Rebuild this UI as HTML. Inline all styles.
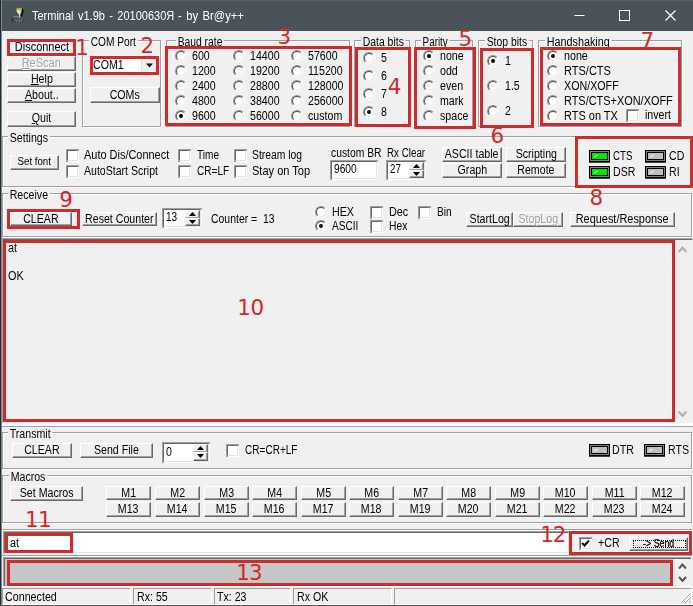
<!DOCTYPE html>
<html><head><meta charset="utf-8"><title>Terminal</title>
<style>
html,body{margin:0;padding:0}
body{width:693px;height:606px;background:#f0f0f0;position:relative;overflow:hidden;font-family:"Liberation Sans", sans-serif;font-size:11px;color:#000}
body>div,body>span,body>svg{position:absolute;box-sizing:content-box}
.t{white-space:pre;display:block;transform-origin:0 50%}
.bt{display:inline-block;transform:scaleX(.88);transform-origin:50% 50%}
.z{z-index:5}
.gl{background:#f0f0f0;padding:0 2px}
.btn{box-sizing:border-box!important;background:#f0f0f0;border-top:1px solid #fff;border-left:1px solid #fff;border-right:1px solid #696969;border-bottom:1px solid #696969;box-shadow:inset -1px -1px 0 #a0a0a0;text-align:center;white-space:nowrap;overflow:hidden;display:flex;justify-content:center}
.sp{display:flex;align-items:center;justify-content:center}
.grp{box-sizing:border-box!important;border:1px solid #a0a0a0;box-shadow:1px 1px 0 #fff, inset 1px 1px 0 #fff}
.rad{width:12px;height:12px;border-radius:50%;box-sizing:border-box!important;border:1px solid;border-color:#909090 #fff #fff #909090;transform:rotate(0deg)}
.rad:before{content:"";position:absolute;left:0;top:0;width:8px;height:8px;border-radius:50%;background:#fff;border:1px solid;border-color:#505050 #e3e3e3 #e3e3e3 #505050}
.rad i{position:absolute;left:3px;top:3px;width:4px;height:4px;background:#000;border-radius:50%}
.chk{width:9px;height:9px;background:#fff;border:1px solid;border-color:#696969 #e3e3e3 #e3e3e3 #696969;outline:0;box-shadow:-1px -1px 0 #a0a0a0, 1px 1px 0 #fff, 1px -1px 0 #a0a0a0, -1px 1px 0 #a0a0a0;margin:1px}
.led{width:21px;height:12px;box-sizing:border-box!important;border:1px solid #000;background:#000;box-shadow:inset 0 0 0 1px #808080, 0 1px 0 #404040}
.led b{position:absolute;left:2px;top:2px;right:2px;bottom:2px}
.edit{background:#fff;border:1px solid;border-color:#696969 #e3e3e3 #e3e3e3 #696969;box-shadow:-1px -1px 0 #a0a0a0, 1px 1px 0 #fff, 1px -1px 0 #a0a0a0, -1px 1px 0 #a0a0a0;margin:1px}
.sb{border:1px solid;border-color:#a0a0a0 #fff #fff #a0a0a0}
</style></head><body>
<div style="left:0px;top:0px;width:693px;height:31px;background:#4b535a"></div>
<div style="left:0px;top:0px;width:693px;height:1px;background:#5b6267"></div>
<div style="left:0px;top:0px;width:1px;height:606px;background:#1e2d36"></div>
<div style="left:1px;top:0px;width:1px;height:606px;background:#7b8a90"></div>
<svg style="left:6px;top:4px" width="24" height="24" viewBox="6 4 24 24">
<rect x="16.6" y="7.9" width="5.2" height="2.3" fill="#cfca08"/>
<rect x="17.2" y="7.6" width="4" height="0.7" fill="#4a5a7a"/>
<path d="M16.2 10.2 L21.5 10.2 L20.3 14.2 L18.3 14.2 Z" fill="#dcdcdc"/>
<path d="M17 10.8 L19 10.8 L18.6 12 L17.4 12Z" fill="#fff"/>
<path d="M22.2 9 Q23.2 10 22.6 12.5 L21.6 16.5" fill="none" stroke="#050505" stroke-width="1.4"/>
<path d="M19.4 14 L19.6 17.6" fill="none" stroke="#c8c8c8" stroke-width="1.1"/>
<path d="M12.2 17.6 L14.5 16.6 L19 16.8" fill="none" stroke="#8a8a8a" stroke-width="1"/>
<path d="M12.3 17 L12.5 22.4 M11.2 19.6 L13.6 19.6" fill="none" stroke="#2a2a2a" stroke-width="1"/>
<path d="M14.5 19.3 L22.5 19.3 L23.6 22.3 L15 22.3 Z" fill="#3a3a3a"/>
<path d="M15.2 20 h1.2 M17.2 20 h1.2 M19.2 20 h1.2 M21 20 h1 M16 21.3 h1.2 M18.4 21.3 h1.4 M20.6 21.3 h1.4" stroke="#b0b0b0" stroke-width="0.8"/>
</svg>
<span class="t" style="left:31.5px;top:7.5px;height:16px;line-height:16px;font-size:12px;color:#fff;transform:scaleX(0.916);word-spacing:1.5px">Terminal v1.9b - 20100630Я</span>
<span class="t" style="left:177.7px;top:7.5px;height:16px;line-height:16px;font-size:12px;color:#fff;transform:scaleX(0.933);word-spacing:1.5px">- by Br@y++</span>
<svg style="left:560px;top:0" width="133" height="31" viewBox="0 0 133 31"><path d="M14.5 15.5 h10" stroke="#fff" stroke-width="1"/><rect x="59.5" y="10.5" width="10" height="10" fill="none" stroke="#fff" stroke-width="1"/><path d="M105.5 10.5 l10 10 M115.5 10.5 l-10 10" stroke="#fff" stroke-width="1.2"/></svg>
<div class="btn" style="left:7px;top:40px;width:69px;height:15px;line-height:12.5px;font-size:12.5px;color:#000;"><span class="bt" style="transform:scaleX(0.875)">Disconnect</span></div>
<div class="btn" style="left:7px;top:56px;width:69px;height:15px;line-height:12.5px;font-size:12.5px;color:#a0a0a0;text-shadow:1px 1px 0 #fff;"><span class="bt" style="transform:scaleX(0.88)"><u>R</u>eScan</span></div>
<div class="btn" style="left:7px;top:72px;width:69px;height:15px;line-height:12.5px;font-size:12.5px;color:#000;"><span class="bt" style="transform:scaleX(0.85)"><u>H</u>elp</span></div>
<div class="btn" style="left:7px;top:88px;width:69px;height:15px;line-height:12.5px;font-size:12.5px;color:#000;"><span class="bt" style="transform:scaleX(0.85)"><u>A</u>bout..</span></div>
<div class="btn" style="left:7px;top:111px;width:69px;height:16px;line-height:12px;font-size:12.5px;color:#000;"><span class="bt" style="transform:scaleX(0.85)"><u>Q</u>uit</span></div>
<div class="z" style="left:7px;top:39px;width:63px;height:11px;border:3px solid #d02a2a"></div>
<span class="t z" style="left:75.3px;top:37.0px;font-size:21.4px;line-height:21.4px;height:21.4px;letter-spacing:0px;color:#d02828;font-family:'DejaVu Sans','Liberation Sans',sans-serif;">1</span>
<div class="grp" style="left:82px;top:40px;width:79px;height:87px"></div>
<span class="t gl" style="left:89.2px;top:34.6px;height:14px;line-height:14px;font-size:12.5px;transform:scaleX(0.814)">COM Port</span>
<div class="edit" style="left:91px;top:57px;width:63px;height:13px;"></div>
<span class="t" style="left:93.2px;top:57.8px;height:14px;line-height:14px;font-size:12.5px;color:#000;transform:scaleX(0.85);">COM1</span>
<svg style="left:141px;top:59px" width="15" height="13" viewBox="0 0 15 13"><rect width="15" height="13" fill="#f0f0f0"/><rect width="1" height="13" fill="#e0e0e0"/><path d="M5 4.5 h7 l-3.5 4z" fill="#000"/></svg>
<div class="z" style="left:90px;top:56px;width:63px;height:13px;border:3px solid #d02a2a"></div>
<span class="t z" style="left:140.4px;top:34.8px;font-size:21.4px;line-height:21.4px;height:21.4px;letter-spacing:0px;color:#d02828;font-family:'DejaVu Sans','Liberation Sans',sans-serif;">2</span>
<div class="btn" style="left:90px;top:87px;width:70px;height:16px;line-height:14px;font-size:12.5px;color:#000;"><span class="bt" style="transform:scaleX(0.85)">COMs</span></div>
<div class="grp" style="left:166px;top:40px;width:184px;height:87px"></div>
<span class="t gl" style="left:175.70000000000002px;top:34.6px;height:14px;line-height:14px;font-size:12.5px;transform:scaleX(0.825)">Baud rate</span>
<div class="rad" style="left:175px;top:50px"></div>
<span class="t" style="left:192px;top:49.0px;height:14px;line-height:14px;font-size:12.5px;color:#000;transform:scaleX(0.85);">600</span>
<div class="rad" style="left:175px;top:64.5px"></div>
<span class="t" style="left:192px;top:63.5px;height:14px;line-height:14px;font-size:12.5px;color:#000;transform:scaleX(0.85);">1200</span>
<div class="rad" style="left:175px;top:79.5px"></div>
<span class="t" style="left:192px;top:78.5px;height:14px;line-height:14px;font-size:12.5px;color:#000;transform:scaleX(0.85);">2400</span>
<div class="rad" style="left:175px;top:94.5px"></div>
<span class="t" style="left:192px;top:93.5px;height:14px;line-height:14px;font-size:12.5px;color:#000;transform:scaleX(0.85);">4800</span>
<div class="rad" style="left:175px;top:109.5px"><i></i></div>
<span class="t" style="left:192px;top:108.5px;height:14px;line-height:14px;font-size:12.5px;color:#000;transform:scaleX(0.85);">9600</span>
<div class="rad" style="left:232.5px;top:50px"></div>
<span class="t" style="left:250px;top:49.0px;height:14px;line-height:14px;font-size:12.5px;color:#000;transform:scaleX(0.85);">14400</span>
<div class="rad" style="left:232.5px;top:64.5px"></div>
<span class="t" style="left:250px;top:63.5px;height:14px;line-height:14px;font-size:12.5px;color:#000;transform:scaleX(0.85);">19200</span>
<div class="rad" style="left:232.5px;top:79.5px"></div>
<span class="t" style="left:250px;top:78.5px;height:14px;line-height:14px;font-size:12.5px;color:#000;transform:scaleX(0.85);">28800</span>
<div class="rad" style="left:232.5px;top:94.5px"></div>
<span class="t" style="left:250px;top:93.5px;height:14px;line-height:14px;font-size:12.5px;color:#000;transform:scaleX(0.85);">38400</span>
<div class="rad" style="left:232.5px;top:109.5px"></div>
<span class="t" style="left:250px;top:108.5px;height:14px;line-height:14px;font-size:12.5px;color:#000;transform:scaleX(0.85);">56000</span>
<div class="rad" style="left:290.8px;top:50px"></div>
<span class="t" style="left:308px;top:49.0px;height:14px;line-height:14px;font-size:12.5px;color:#000;transform:scaleX(0.85);">57600</span>
<div class="rad" style="left:290.8px;top:64.5px"></div>
<span class="t" style="left:308px;top:63.5px;height:14px;line-height:14px;font-size:12.5px;color:#000;transform:scaleX(0.85);">115200</span>
<div class="rad" style="left:290.8px;top:79.5px"></div>
<span class="t" style="left:308px;top:78.5px;height:14px;line-height:14px;font-size:12.5px;color:#000;transform:scaleX(0.85);">128000</span>
<div class="rad" style="left:290.8px;top:94.5px"></div>
<span class="t" style="left:308px;top:93.5px;height:14px;line-height:14px;font-size:12.5px;color:#000;transform:scaleX(0.85);">256000</span>
<div class="rad" style="left:290.8px;top:109.5px"></div>
<span class="t" style="left:308px;top:108.5px;height:14px;line-height:14px;font-size:12.5px;color:#000;transform:scaleX(0.85);">custom</span>
<div class="z" style="left:165px;top:46px;width:180.5px;height:73.5px;border:3px solid #d02a2a"></div>
<span class="t z" style="left:277.5px;top:26.0px;font-size:21.4px;line-height:21.4px;height:21.4px;letter-spacing:0px;color:#d02828;font-family:'DejaVu Sans','Liberation Sans',sans-serif;">3</span>
<div class="grp" style="left:354px;top:40px;width:56px;height:87px"></div>
<span class="t gl" style="left:360.7px;top:34.6px;height:14px;line-height:14px;font-size:12.5px;transform:scaleX(0.835)">Data bits</span>
<div class="rad" style="left:362.5px;top:51.7px"></div>
<span class="t" style="left:381px;top:50.7px;height:14px;line-height:14px;font-size:12.5px;color:#000;transform:scaleX(0.85);">5</span>
<div class="rad" style="left:362.5px;top:70.2px"></div>
<span class="t" style="left:381px;top:69.2px;height:14px;line-height:14px;font-size:12.5px;color:#000;transform:scaleX(0.85);">6</span>
<div class="rad" style="left:362.5px;top:88.3px"></div>
<span class="t" style="left:381px;top:87.3px;height:14px;line-height:14px;font-size:12.5px;color:#000;transform:scaleX(0.85);">7</span>
<div class="rad" style="left:362.5px;top:106px"><i></i></div>
<span class="t" style="left:381px;top:105.0px;height:14px;line-height:14px;font-size:12.5px;color:#000;transform:scaleX(0.85);">8</span>
<div class="z" style="left:355px;top:47px;width:50px;height:74px;border:3px solid #d02a2a"></div>
<span class="t z" style="left:387.8px;top:76.0px;font-size:21.4px;line-height:21.4px;height:21.4px;letter-spacing:0px;color:#d02828;font-family:'DejaVu Sans','Liberation Sans',sans-serif;">4</span>
<div class="grp" style="left:415px;top:40px;width:58px;height:87px"></div>
<span class="t gl" style="left:421.09999999999997px;top:34.6px;height:14px;line-height:14px;font-size:12.5px;transform:scaleX(0.789)">Parity</span>
<div class="rad" style="left:422.5px;top:50px"><i></i></div>
<span class="t" style="left:439.9px;top:49.0px;height:14px;line-height:14px;font-size:12.5px;color:#000;transform:scaleX(0.85);">none</span>
<div class="rad" style="left:422.5px;top:65px"></div>
<span class="t" style="left:439.9px;top:64.0px;height:14px;line-height:14px;font-size:12.5px;color:#000;transform:scaleX(0.85);">odd</span>
<div class="rad" style="left:422.5px;top:80.2px"></div>
<span class="t" style="left:439.9px;top:79.2px;height:14px;line-height:14px;font-size:12.5px;color:#000;transform:scaleX(0.85);">even</span>
<div class="rad" style="left:422.5px;top:95.2px"></div>
<span class="t" style="left:439.9px;top:94.2px;height:14px;line-height:14px;font-size:12.5px;color:#000;transform:scaleX(0.85);">mark</span>
<div class="rad" style="left:422.5px;top:110px"></div>
<span class="t" style="left:439.9px;top:109.0px;height:14px;line-height:14px;font-size:12.5px;color:#000;transform:scaleX(0.85);">space</span>
<div class="z" style="left:414px;top:47px;width:55.5px;height:75.5px;border:3px solid #d02a2a"></div>
<span class="t z" style="left:458.5px;top:28.3px;font-size:21.4px;line-height:21.4px;height:21.4px;letter-spacing:0px;color:#d02828;font-family:'DejaVu Sans','Liberation Sans',sans-serif;">5</span>
<div class="grp" style="left:478px;top:40px;width:55px;height:87px"></div>
<span class="t gl" style="left:484.9px;top:34.6px;height:14px;line-height:14px;font-size:12.5px;transform:scaleX(0.831)">Stop bits</span>
<div class="rad" style="left:486.5px;top:54.6px"><i></i></div>
<span class="t" style="left:504.5px;top:53.6px;height:14px;line-height:14px;font-size:12.5px;color:#000;transform:scaleX(0.85);">1</span>
<div class="rad" style="left:486.5px;top:79.7px"></div>
<span class="t" style="left:504.5px;top:78.7px;height:14px;line-height:14px;font-size:12.5px;color:#000;transform:scaleX(0.85);">1.5</span>
<div class="rad" style="left:486.5px;top:104.8px"></div>
<span class="t" style="left:504.5px;top:103.8px;height:14px;line-height:14px;font-size:12.5px;color:#000;transform:scaleX(0.85);">2</span>
<div class="z" style="left:480px;top:48px;width:47.5px;height:74px;border:3px solid #d02a2a"></div>
<span class="t z" style="left:490.5px;top:125.0px;font-size:21.4px;line-height:21.4px;height:21.4px;letter-spacing:0px;color:#d02828;font-family:'DejaVu Sans','Liberation Sans',sans-serif;">6</span>
<div class="grp" style="left:538px;top:40px;width:144px;height:87px"></div>
<span class="t gl" style="left:544.9px;top:34.6px;height:14px;line-height:14px;font-size:12.5px;transform:scaleX(0.863)">Handshaking</span>
<div class="rad" style="left:546.5px;top:50px"><i></i></div>
<span class="t" style="left:563.8px;top:49.0px;height:14px;line-height:14px;font-size:12.5px;color:#000;transform:scaleX(0.856);">none</span>
<div class="rad" style="left:546.5px;top:64.5px"></div>
<span class="t" style="left:563.8px;top:63.5px;height:14px;line-height:14px;font-size:12.5px;color:#000;transform:scaleX(0.881);">RTS/CTS</span>
<div class="rad" style="left:546.5px;top:79.5px"></div>
<span class="t" style="left:563.8px;top:78.5px;height:14px;line-height:14px;font-size:12.5px;color:#000;transform:scaleX(0.856);">XON/XOFF</span>
<div class="rad" style="left:546.5px;top:94.7px"></div>
<span class="t" style="left:563.8px;top:93.7px;height:14px;line-height:14px;font-size:12.5px;color:#000;transform:scaleX(0.874);">RTS/CTS+XON/XOFF</span>
<div class="rad" style="left:546.5px;top:109.7px"></div>
<span class="t" style="left:563.8px;top:108.7px;height:14px;line-height:14px;font-size:12.5px;color:#000;transform:scaleX(0.878);">RTS on TX</span>
<div class="chk" style="left:626px;top:109px"></div>
<span class="t" style="left:644.6px;top:108.0px;height:14px;line-height:14px;font-size:12.5px;color:#000;transform:scaleX(0.847);">invert</span>
<div class="z" style="left:540px;top:47px;width:135px;height:73px;border:3px solid #d02a2a"></div>
<span class="t z" style="left:640.5px;top:30.0px;font-size:21.4px;line-height:21.4px;height:21.4px;letter-spacing:0px;color:#d02828;font-family:'DejaVu Sans','Liberation Sans',sans-serif;">7</span>
<div class="grp" style="left:2px;top:136px;width:690px;height:51px"></div>
<span class="t gl" style="left:8.4px;top:130.5px;height:14px;line-height:14px;font-size:12.5px;transform:scaleX(0.85)">Settings</span>
<div class="btn" style="left:10px;top:155px;width:49px;height:15px;line-height:12px;font-size:10px;color:#000;"><span class="bt" style="transform:scaleX(0.97)">Set font</span></div>
<div class="chk" style="left:66px;top:149px"></div>
<span class="t" style="left:84px;top:148.0px;height:14px;line-height:14px;font-size:12.5px;color:#000;transform:scaleX(0.876);">Auto Dis/Connect</span>
<div class="chk" style="left:66px;top:165px"></div>
<span class="t" style="left:84px;top:164.0px;height:14px;line-height:14px;font-size:12.5px;color:#000;transform:scaleX(0.845);">AutoStart Script</span>
<div class="chk" style="left:178px;top:149px"></div>
<span class="t" style="left:197px;top:148.0px;height:14px;line-height:14px;font-size:12.5px;color:#000;transform:scaleX(0.805);">Time</span>
<div class="chk" style="left:178px;top:165px"></div>
<span class="t" style="left:196.7px;top:164.0px;height:14px;line-height:14px;font-size:12.5px;color:#000;transform:scaleX(0.804);">CR=LF</span>
<div class="chk" style="left:234px;top:149px"></div>
<span class="t" style="left:252.3px;top:148.0px;height:14px;line-height:14px;font-size:12.5px;color:#000;transform:scaleX(0.827);">Stream log</span>
<div class="chk" style="left:234px;top:165px"></div>
<span class="t" style="left:252.3px;top:164.0px;height:14px;line-height:14px;font-size:12.5px;color:#000;transform:scaleX(0.883);">Stay on Top</span>
<span class="t" style="left:330.7px;top:146.1px;height:14px;line-height:14px;font-size:12.5px;color:#000;transform:scaleX(0.826);">custom BR</span>
<div class="edit" style="left:330px;top:160px;width:44px;height:16px"></div>
<span class="t" style="left:334px;top:161.7px;height:14px;line-height:14px;font-size:12.5px;color:#000;transform:scaleX(0.816);">9600</span>
<span class="t" style="left:387.4px;top:146.1px;height:14px;line-height:14px;font-size:12.5px;color:#000;transform:scaleX(0.784);">Rx Clear</span>
<div class="edit" style="left:386px;top:160px;width:36px;height:16px"></div>
<span class="t" style="left:390px;top:162.4px;height:14px;line-height:14px;font-size:12.5px;color:#000;transform:scaleX(0.777);">27</span>
<div class="btn" style="left:409px;top:162px;width:15px;height:8px;border-bottom-color:#a0a0a0;box-shadow:inset -1px 0 0 #a0a0a0;"><svg width="7" height="4" viewBox="0 0 7 4" style="position:absolute;left:3px;top:1px"><path d="M0 4 L3.5 0 L7 4Z" fill="#000"/></svg></div>
<div class="btn" style="left:409px;top:170px;width:15px;height:8px;"><svg width="7" height="4" viewBox="0 0 7 4" style="position:absolute;left:3px;top:1px"><path d="M0 0 L3.5 4 L7 0Z" fill="#000"/></svg></div>
<div class="btn" style="left:442px;top:147px;width:60px;height:15px;line-height:12px;font-size:12.5px;color:#000;"><span class="bt" style="transform:scaleX(0.85)">ASCII table</span></div>
<div class="btn" style="left:442px;top:163px;width:60px;height:15px;line-height:12px;font-size:12.5px;color:#000;"><span class="bt" style="transform:scaleX(0.85)">Graph</span></div>
<div class="btn" style="left:506px;top:147px;width:60px;height:15px;line-height:12px;font-size:12.5px;color:#000;"><span class="bt" style="transform:scaleX(0.85)">Scripting</span></div>
<div class="btn" style="left:506px;top:163px;width:60px;height:15px;line-height:12px;font-size:12.5px;color:#000;"><span class="bt" style="transform:scaleX(0.85)">Remote</span></div>
<div class="led" style="left:589px;top:150px"><b style="background:#00e800"></b><svg width="15" height="6" viewBox="0 0 15 6" style="position:absolute;left:3px;top:3px"><path d="M1.5 3.5 Q1.5 1.5 4.5 1.5" fill="none" stroke="#fff" stroke-width="1"/></svg></div>
<span class="t" style="left:613px;top:149.0px;height:14px;line-height:14px;font-size:12.5px;color:#000;transform:scaleX(0.776);">CTS</span>
<div class="led" style="left:589px;top:166px"><b style="background:#00e800"></b><svg width="15" height="6" viewBox="0 0 15 6" style="position:absolute;left:3px;top:3px"><path d="M1.5 3.5 Q1.5 1.5 4.5 1.5" fill="none" stroke="#fff" stroke-width="1"/></svg></div>
<span class="t" style="left:613px;top:165.0px;height:14px;line-height:14px;font-size:12.5px;color:#000;transform:scaleX(0.85);">DSR</span>
<div class="led" style="left:645px;top:150px"><b style="background:#c0c0c0"></b><svg width="15" height="6" viewBox="0 0 15 6" style="position:absolute;left:3px;top:3px"><path d="M1.5 3.5 Q1.5 1.5 4.5 1.5" fill="none" stroke="#fff" stroke-width="1"/></svg></div>
<span class="t" style="left:668.7px;top:149.0px;height:14px;line-height:14px;font-size:12.5px;color:#000;transform:scaleX(0.85);">CD</span>
<div class="led" style="left:645px;top:166px"><b style="background:#c0c0c0"></b><svg width="15" height="6" viewBox="0 0 15 6" style="position:absolute;left:3px;top:3px"><path d="M1.5 3.5 Q1.5 1.5 4.5 1.5" fill="none" stroke="#fff" stroke-width="1"/></svg></div>
<span class="t" style="left:668.7px;top:165.0px;height:14px;line-height:14px;font-size:12.5px;color:#000;transform:scaleX(0.85);">RI</span>
<div class="z" style="left:575px;top:136px;width:111.5px;height:46px;border:3px solid #d02a2a"></div>
<span class="t z" style="left:589.5px;top:187.0px;font-size:21.4px;line-height:21.4px;height:21.4px;letter-spacing:0px;color:#d02828;font-family:'DejaVu Sans','Liberation Sans',sans-serif;">8</span>
<div class="grp" style="left:2px;top:193px;width:690px;height:44px"></div>
<span class="t gl" style="left:8.4px;top:187.5px;height:14px;line-height:14px;font-size:12.5px;transform:scaleX(0.85)">Receive</span>
<div style="left:2px;top:238px;width:690px;height:1px;background:#a0a0a0"></div>
<div style="left:2px;top:239px;width:690px;height:1px;background:#696969"></div>
<div style="left:2px;top:238px;width:1px;height:188px;background:#a0a0a0"></div>
<div class="btn" style="left:10px;top:212px;width:62px;height:14px;line-height:12px;font-size:12.5px;color:#000;"><span class="bt" style="transform:scaleX(0.85)">CLEAR</span></div>
<div class="z" style="left:7px;top:209px;width:67px;height:14px;border:3px solid #d02a2a"></div>
<span class="t z" style="left:59.3px;top:189.0px;font-size:21.4px;line-height:21.4px;height:21.4px;letter-spacing:0px;color:#d02828;font-family:'DejaVu Sans','Liberation Sans',sans-serif;">9</span>
<div class="btn" style="left:82px;top:212px;width:75px;height:14px;line-height:12px;font-size:12.5px;color:#000;"><span class="bt" style="transform:scaleX(0.85)">Reset Counter</span></div>
<div class="edit" style="left:162px;top:208px;width:36px;height:16px"></div>
<span class="t" style="left:165.8px;top:210.4px;height:14px;line-height:14px;font-size:12.5px;color:#000;transform:scaleX(0.806);">13</span>
<div class="btn" style="left:185px;top:210px;width:15px;height:8px;border-bottom-color:#a0a0a0;box-shadow:inset -1px 0 0 #a0a0a0;"><svg width="7" height="4" viewBox="0 0 7 4" style="position:absolute;left:3px;top:1px"><path d="M0 4 L3.5 0 L7 4Z" fill="#000"/></svg></div>
<div class="btn" style="left:185px;top:218px;width:15px;height:8px;"><svg width="7" height="4" viewBox="0 0 7 4" style="position:absolute;left:3px;top:1px"><path d="M0 0 L3.5 4 L7 0Z" fill="#000"/></svg></div>
<span class="t" style="left:210.6px;top:212.0px;height:14px;line-height:14px;font-size:12.5px;color:#000;transform:scaleX(0.836);">Counter =&nbsp; 13</span>
<div class="rad" style="left:314.5px;top:205.5px"></div>
<span class="t" style="left:332px;top:204.5px;height:14px;line-height:14px;font-size:12.5px;color:#000;transform:scaleX(0.856);">HEX</span>
<div class="rad" style="left:314.5px;top:219.5px"><i></i></div>
<span class="t" style="left:332px;top:218.5px;height:14px;line-height:14px;font-size:12.5px;color:#000;transform:scaleX(0.809);">ASCII</span>
<div class="chk" style="left:370px;top:206px"></div>
<span class="t" style="left:388.7px;top:205.0px;height:14px;line-height:14px;font-size:12.5px;color:#000;transform:scaleX(0.868);">Dec</span>
<div class="chk" style="left:370px;top:220px"></div>
<span class="t" style="left:388.7px;top:219.0px;height:14px;line-height:14px;font-size:12.5px;color:#000;transform:scaleX(0.823);">Hex</span>
<div class="chk" style="left:418px;top:206px"></div>
<span class="t" style="left:436.7px;top:205.0px;height:14px;line-height:14px;font-size:12.5px;color:#000;transform:scaleX(0.814);">Bin</span>
<div class="btn" style="left:466px;top:212px;width:47px;height:15px;line-height:13px;font-size:12.5px;color:#000;"><span class="bt" style="transform:scaleX(0.85)">StartLog</span></div>
<div class="btn" style="left:513px;top:212px;width:50px;height:15px;line-height:13px;font-size:12.5px;color:#a0a0a0;text-shadow:1px 1px 0 #fff;"><span class="bt" style="transform:scaleX(0.85)">StopLog</span></div>
<div class="btn" style="left:570px;top:212px;width:105px;height:15px;line-height:13px;font-size:12.5px;color:#000;"><span class="bt" style="transform:scaleX(0.875)">Request/Response</span></div>
<div class="z" style="left:3px;top:240px;width:666px;height:176px;border:3px solid #d02a2a"></div>
<span class="t" style="left:7.8px;top:240.6px;height:14px;line-height:14px;font-size:12.5px;color:#000;transform:scaleX(0.87);">at</span>
<span class="t" style="left:7.8px;top:268.6px;height:14px;line-height:14px;font-size:12.5px;color:#000;transform:scaleX(0.87);">OK</span>
<span class="t z" style="left:237.3px;top:297.0px;font-size:21.4px;line-height:21.4px;height:21.4px;letter-spacing:-0.5px;color:#d02828;font-family:'DejaVu Sans','Liberation Sans',sans-serif;">10</span>
<svg style="left:675px;top:240px" width="17" height="183" viewBox="0 0 17 183"><path d="M3.7 12 l3.8 -4.3 l3.8 4.3 M3.7 171.5 l3.8 4.3 l3.8 -4.3" fill="none" stroke="#b0b0b0" stroke-width="2.1"/></svg>
<div style="left:2px;top:423px;width:691px;height:3px;background:#fff"></div>
<div style="left:2px;top:426px;width:691px;height:1px;background:#a0a0a0"></div>
<div class="grp" style="left:2px;top:432px;width:690px;height:37px"></div>
<span class="t gl" style="left:8.4px;top:426.5px;height:14px;line-height:14px;font-size:12.5px;transform:scaleX(0.85)">Transmit</span>
<div class="btn" style="left:12px;top:443px;width:60px;height:15px;line-height:12px;font-size:12.5px;color:#000;"><span class="bt" style="transform:scaleX(0.85)">CLEAR</span></div>
<div class="btn" style="left:80px;top:443px;width:73px;height:15px;line-height:12px;font-size:12.5px;color:#000;"><span class="bt" style="transform:scaleX(0.85)">Send File</span></div>
<div class="edit" style="left:162px;top:442px;width:44px;height:17px"></div>
<span class="t" style="left:165.5px;top:445.1px;height:14px;line-height:14px;font-size:12.5px;color:#000;transform:scaleX(0.85);">0</span>
<div class="btn" style="left:193px;top:444px;width:15px;height:8px;border-bottom-color:#a0a0a0;box-shadow:inset -1px 0 0 #a0a0a0;"><svg width="7" height="4" viewBox="0 0 7 4" style="position:absolute;left:3px;top:1px"><path d="M0 4 L3.5 0 L7 4Z" fill="#000"/></svg></div>
<div class="btn" style="left:193px;top:452px;width:15px;height:9px;"><svg width="7" height="4" viewBox="0 0 7 4" style="position:absolute;left:3px;top:1px"><path d="M0 0 L3.5 4 L7 0Z" fill="#000"/></svg></div>
<div class="chk" style="left:226px;top:443.5px"></div>
<span class="t" style="left:244.7px;top:443.0px;height:14px;line-height:14px;font-size:12.5px;color:#000;transform:scaleX(0.804);">CR=CR+LF</span>
<div class="led" style="left:588.5px;top:443.5px"><b style="background:#c0c0c0"></b><svg width="15" height="6" viewBox="0 0 15 6" style="position:absolute;left:3px;top:3px"><path d="M1.5 3.5 Q1.5 1.5 4.5 1.5" fill="none" stroke="#fff" stroke-width="1"/></svg></div>
<span class="t" style="left:612.3px;top:443.2px;height:14px;line-height:14px;font-size:12.5px;color:#000;transform:scaleX(0.85);">DTR</span>
<div class="led" style="left:644.3px;top:443.5px"><b style="background:#c0c0c0"></b><svg width="15" height="6" viewBox="0 0 15 6" style="position:absolute;left:3px;top:3px"><path d="M1.5 3.5 Q1.5 1.5 4.5 1.5" fill="none" stroke="#fff" stroke-width="1"/></svg></div>
<span class="t" style="left:668.3px;top:443.2px;height:14px;line-height:14px;font-size:12.5px;color:#000;transform:scaleX(0.85);">RTS</span>
<div class="grp" style="left:2px;top:475px;width:690px;height:48px"></div>
<span class="t gl" style="left:9.1px;top:469.5px;height:14px;line-height:14px;font-size:12.5px;transform:scaleX(0.847)">Macros</span>
<div class="btn" style="left:10px;top:486px;width:73px;height:15px;line-height:12px;font-size:12.5px;color:#000;"><span class="bt" style="transform:scaleX(0.85)">Set Macros</span></div>
<div class="btn" style="left:106px;top:486px;width:45px;height:14px;line-height:12px;font-size:12.5px;color:#000;"><span class="bt" style="transform:scaleX(0.85)">M1</span></div>
<div class="btn" style="left:106px;top:502px;width:45px;height:15px;line-height:12px;font-size:12.5px;color:#000;"><span class="bt" style="transform:scaleX(0.85)">M13</span></div>
<div class="btn" style="left:155px;top:486px;width:45px;height:14px;line-height:12px;font-size:12.5px;color:#000;"><span class="bt" style="transform:scaleX(0.85)">M2</span></div>
<div class="btn" style="left:155px;top:502px;width:45px;height:15px;line-height:12px;font-size:12.5px;color:#000;"><span class="bt" style="transform:scaleX(0.85)">M14</span></div>
<div class="btn" style="left:204px;top:486px;width:45px;height:14px;line-height:12px;font-size:12.5px;color:#000;"><span class="bt" style="transform:scaleX(0.85)">M3</span></div>
<div class="btn" style="left:204px;top:502px;width:45px;height:15px;line-height:12px;font-size:12.5px;color:#000;"><span class="bt" style="transform:scaleX(0.85)">M15</span></div>
<div class="btn" style="left:252px;top:486px;width:45px;height:14px;line-height:12px;font-size:12.5px;color:#000;"><span class="bt" style="transform:scaleX(0.85)">M4</span></div>
<div class="btn" style="left:252px;top:502px;width:45px;height:15px;line-height:12px;font-size:12.5px;color:#000;"><span class="bt" style="transform:scaleX(0.85)">M16</span></div>
<div class="btn" style="left:301px;top:486px;width:45px;height:14px;line-height:12px;font-size:12.5px;color:#000;"><span class="bt" style="transform:scaleX(0.85)">M5</span></div>
<div class="btn" style="left:301px;top:502px;width:45px;height:15px;line-height:12px;font-size:12.5px;color:#000;"><span class="bt" style="transform:scaleX(0.85)">M17</span></div>
<div class="btn" style="left:349px;top:486px;width:45px;height:14px;line-height:12px;font-size:12.5px;color:#000;"><span class="bt" style="transform:scaleX(0.85)">M6</span></div>
<div class="btn" style="left:349px;top:502px;width:45px;height:15px;line-height:12px;font-size:12.5px;color:#000;"><span class="bt" style="transform:scaleX(0.85)">M18</span></div>
<div class="btn" style="left:398px;top:486px;width:45px;height:14px;line-height:12px;font-size:12.5px;color:#000;"><span class="bt" style="transform:scaleX(0.85)">M7</span></div>
<div class="btn" style="left:398px;top:502px;width:45px;height:15px;line-height:12px;font-size:12.5px;color:#000;"><span class="bt" style="transform:scaleX(0.85)">M19</span></div>
<div class="btn" style="left:446px;top:486px;width:45px;height:14px;line-height:12px;font-size:12.5px;color:#000;"><span class="bt" style="transform:scaleX(0.85)">M8</span></div>
<div class="btn" style="left:446px;top:502px;width:45px;height:15px;line-height:12px;font-size:12.5px;color:#000;"><span class="bt" style="transform:scaleX(0.85)">M20</span></div>
<div class="btn" style="left:495px;top:486px;width:45px;height:14px;line-height:12px;font-size:12.5px;color:#000;"><span class="bt" style="transform:scaleX(0.85)">M9</span></div>
<div class="btn" style="left:495px;top:502px;width:45px;height:15px;line-height:12px;font-size:12.5px;color:#000;"><span class="bt" style="transform:scaleX(0.85)">M21</span></div>
<div class="btn" style="left:543px;top:486px;width:45px;height:14px;line-height:12px;font-size:12.5px;color:#000;"><span class="bt" style="transform:scaleX(0.85)">M10</span></div>
<div class="btn" style="left:543px;top:502px;width:45px;height:15px;line-height:12px;font-size:12.5px;color:#000;"><span class="bt" style="transform:scaleX(0.85)">M22</span></div>
<div class="btn" style="left:592px;top:486px;width:45px;height:14px;line-height:12px;font-size:12.5px;color:#000;"><span class="bt" style="transform:scaleX(0.85)">M11</span></div>
<div class="btn" style="left:592px;top:502px;width:45px;height:15px;line-height:12px;font-size:12.5px;color:#000;"><span class="bt" style="transform:scaleX(0.85)">M23</span></div>
<div class="btn" style="left:640px;top:486px;width:45px;height:14px;line-height:12px;font-size:12.5px;color:#000;"><span class="bt" style="transform:scaleX(0.85)">M12</span></div>
<div class="btn" style="left:640px;top:502px;width:45px;height:15px;line-height:12px;font-size:12.5px;color:#000;"><span class="bt" style="transform:scaleX(0.85)">M24</span></div>
<div style="left:2px;top:529px;width:690px;height:1px;background:#a0a0a0"></div>
<div style="left:2px;top:530px;width:690px;height:1px;background:#fff"></div>
<div class="edit" style="left:3px;top:531px;width:563px;height:19px"></div>
<span class="t" style="left:9.8px;top:535.6px;height:14px;line-height:14px;font-size:12.5px;color:#000;transform:scaleX(0.87);">at</span>
<div class="z" style="left:5px;top:533px;width:62px;height:14px;border:3px solid #d02a2a"></div>
<span class="t z" style="left:25.1px;top:509.0px;font-size:21.4px;line-height:21.4px;height:21.4px;letter-spacing:-0.7px;color:#d02828;font-family:'DejaVu Sans','Liberation Sans',sans-serif;">11</span>
<div class="chk" style="left:579px;top:536.5px"><svg width="13" height="13" viewBox="0 0 13 13" style="position:absolute;left:-2px;top:-2px"><path d="M3 6 L5.5 8.5 L10 3.5" fill="none" stroke="#000" stroke-width="2"/></svg></div>
<span class="t" style="left:597.5px;top:536.0px;height:14px;line-height:14px;font-size:12.5px;color:#000;transform:scaleX(0.85);">+CR</span>
<div class="btn" style="left:629px;top:537px;width:59px;height:14px;line-height:11px;font-size:10px;color:#000;-webkit-text-stroke:0.25px #000;"><span class="bt" style="transform:scaleX(0.88)">-&gt; Send</span></div>
<div style="left:633px;top:540px;width:51px;height:6px;border:1px dotted #000"></div>
<div class="z" style="left:569px;top:531px;width:117px;height:18px;border:3px solid #d02a2a"></div>
<span class="t z" style="left:540.3px;top:523.9px;font-size:21.4px;line-height:21.4px;height:21.4px;letter-spacing:-1.2px;color:#d02828;font-family:'DejaVu Sans','Liberation Sans',sans-serif;">12</span>
<div style="left:2px;top:555px;width:690px;height:1px;background:#a0a0a0"></div>
<div style="left:2px;top:556px;width:690px;height:1px;background:#fff"></div>
<div style="left:3px;top:557px;width:688px;height:1px;background:#a0a0a0"></div>
<div style="left:3px;top:558px;width:688px;height:1px;background:#696969"></div>
<div style="left:3px;top:557px;width:1px;height:30px;background:#a0a0a0"></div>
<div style="left:4px;top:558px;width:1px;height:29px;background:#696969"></div>
<div style="left:5px;top:559px;width:668px;height:27px;background:#c6c6c6"></div>
<div class="z" style="left:7px;top:560px;width:660px;height:20px;border:3px solid #d02a2a"></div>
<span class="t z" style="left:236.2px;top:562.0px;font-size:21.4px;line-height:21.4px;height:21.4px;letter-spacing:-0.8px;color:#d02828;font-family:'DejaVu Sans','Liberation Sans',sans-serif;">13</span>
<svg style="left:673px;top:559px" width="18" height="28" viewBox="0 0 18 28"><path d="M6 9.5 l3.5 -3.8 l3.5 3.8 M6 18 l3.5 3.8 l3.5 -3.8" fill="none" stroke="#505050" stroke-width="1.9"/></svg>
<div style="left:3px;top:586px;width:688px;height:1px;background:#fff"></div>
<div class="sb" style="left:2px;top:588px;width:127px;height:15px"></div>
<span class="t" style="left:4.6px;top:589.6px;height:14px;line-height:14px;font-size:12.5px;color:#000;transform:scaleX(0.857);">Connected</span>
<div class="sb" style="left:133px;top:588px;width:77px;height:15px"></div>
<span class="t" style="left:136.5px;top:589.6px;height:14px;line-height:14px;font-size:12.5px;color:#000;transform:scaleX(0.85);">Rx: 55</span>
<div class="sb" style="left:214px;top:588px;width:75px;height:15px"></div>
<span class="t" style="left:217.4px;top:589.6px;height:14px;line-height:14px;font-size:12.5px;color:#000;transform:scaleX(0.85);">Tx: 23</span>
<div class="sb" style="left:293px;top:588px;width:97px;height:15px"></div>
<span class="t" style="left:296.6px;top:589.6px;height:14px;line-height:14px;font-size:12.5px;color:#000;transform:scaleX(0.85);">Rx OK</span>
<div class="sb" style="left:394px;top:588px;width:296px;height:15px"></div>
<svg style="left:679px;top:591px" width="13" height="13" viewBox="0 0 13 13"><path d="M12 2 L2 12 M12 6 L6 12 M12 10 L10 12" stroke="#a0a0a0" stroke-width="1"/><path d="M13 2 L3 12 M13 6 L7 12 M13 10 L11 12" stroke="#fff" stroke-width="1" transform="translate(-2,0)"/></svg>
<div style="left:0px;top:605px;width:693px;height:1px;background:#555"></div>
</body></html>
